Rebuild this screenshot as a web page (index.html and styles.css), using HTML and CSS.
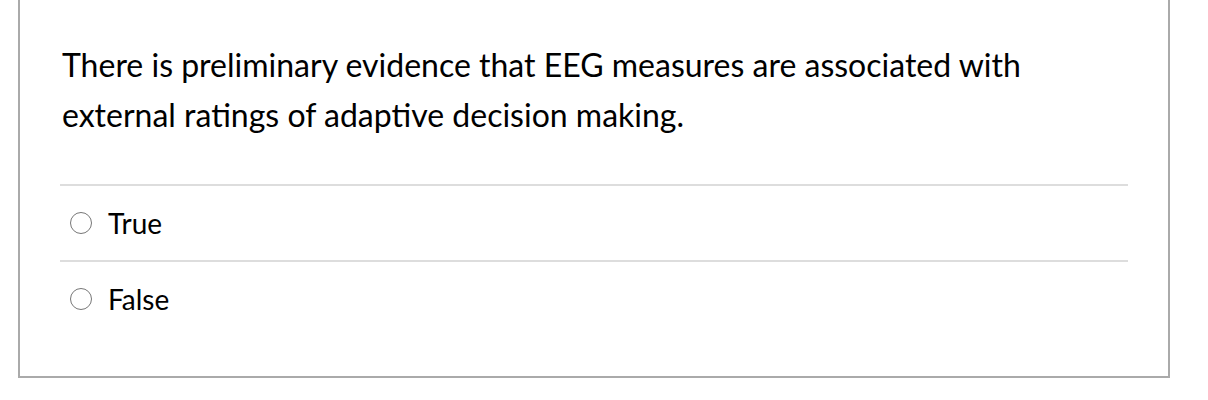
FILE: index.html
```html
<!DOCTYPE html>
<html>
<head>
<meta charset="utf-8">
<link rel="stylesheet" href="styles.css">
</head>
<body>
<div class="quiz">
  <div class="question">There is preliminary evidence that EEG measures are associated with external ratings of adaptive decision making.</div>
  <div class="answers">
    <label class="answer"><span class="radio"></span><span class="label">True</span></label>
    <label class="answer"><span class="radio"></span><span class="label">False</span></label>
  </div>
</div>
</body>
</html>
```
FILE: styles.css
```css
html, body {
  margin: 0;
  padding: 0;
  background: #fff;
}
body {
  font-family: Lato, "Liberation Sans", sans-serif;
  color: #000;
}
.quiz {
  margin-left: 18px;
  width: 1148px;
  height: 376px;
  border: 2px solid #aaa;
  border-top: none;
  box-sizing: content-box;
  display: flex;
  flex-direction: column;
}
.question {
  font-size: 32px;
  line-height: 50px;
  padding: 40px 80px 0 42px;
  height: 184px;
  box-sizing: border-box;
  flex: none;
}
.answers {
  margin: 0 40px;
  display: flex;
  flex-direction: column;
}
.answer {
  display: flex;
  align-items: center;
  height: 76px;
  border-top: 2px solid #ddd;
  box-sizing: border-box;
  font-size: 28px;
}
.radio {
  width: 20px;
  height: 20px;
  border: 1.5px solid #777;
  border-radius: 50%;
  margin-left: 10px;
  margin-right: 16px;
  flex: none;
}
```
